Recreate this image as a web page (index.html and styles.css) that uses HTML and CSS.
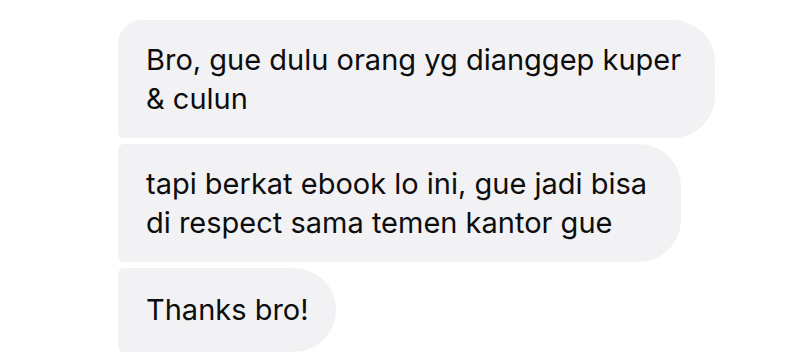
FILE: index.html
```html
<!DOCTYPE html>
<html lang="id">
<head>
<meta charset="utf-8">
<link rel="stylesheet" href="styles.css">
</head>
<body>
<div class="thread">
  <div class="bubble first">Bro, gue dulu orang yg dianggep kuper<br>&amp; culun</div>
  <div class="bubble middle">tapi berkat ebook lo ini, gue jadi bisa<br>di respect sama temen kantor gue</div>
  <div class="bubble last">Thanks bro!</div>
</div>
</body>
</html>
```

FILE: styles.css
```css
html, body {
  margin: 0;
  background: #ffffff;
}
.thread {
  display: flex;
  flex-direction: column;
  align-items: flex-start;
  gap: 6px;
  padding: 20px 0 0 118px;
  font-family: Inter, "Noto Sans", sans-serif;
  font-size: 29px;
  line-height: 39px;
  color: #0d0d0d;
}
.bubble {
  background: #f2f2f5;
  padding: 20px 34px 20px 28px;
  border-radius: 6px 42px 42px 6px;
}
.first {
  border-top-left-radius: 24px;
}
.last {
  padding-top: 22px;
  padding-right: 27px;
  padding-bottom: 23px;
}
```
